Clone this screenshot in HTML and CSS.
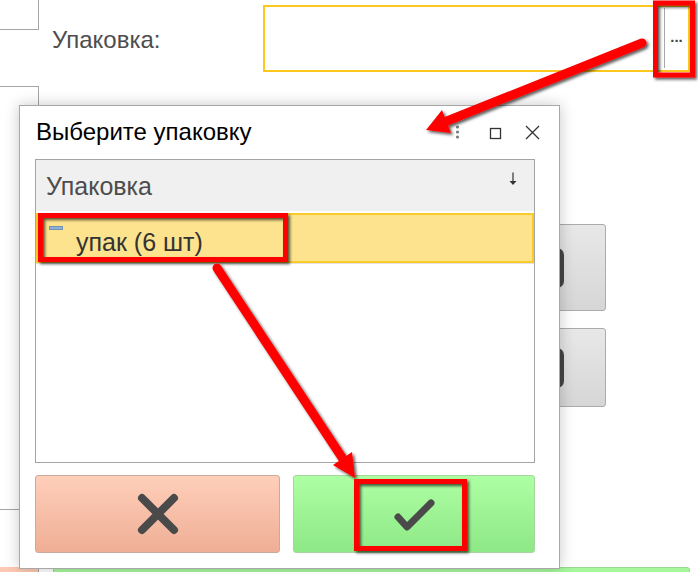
FILE: index.html
```html
<!DOCTYPE html>
<html lang="ru">
<head>
<meta charset="utf-8">
<title>Выберите упаковку</title>
<link rel="stylesheet" href="styles.css">
</head>
<body>
<div class="bg">
  <div class="row1">
    <div class="stub stub-top"></div>
    <div class="field-label">Упаковка:</div>
    <div class="input">
      <div class="input-btn">...</div>
    </div>
  </div>
  <div class="row2">
    <div class="stub stub-mid"></div>
    <div class="side-btns">
      <div class="gbtn gbtn-1"><span class="gicon"></span></div>
      <div class="gbtn gbtn-2"><span class="gicon"></span></div>
    </div>
  </div>
  <div class="row3">
    <div class="stub-bot"></div>
    <div class="green-bar"></div>
  </div>
</div>

<div class="dlg">
  <div class="dlg-title">
    <span class="dlg-title-text">Выберите упаковку</span>
    <svg class="title-icons" width="86" height="16" viewBox="0 0 86 16">
      <circle cx="2.5" cy="2" r="1.6" fill="#7a7a7a"/>
      <circle cx="2.5" cy="7" r="1.6" fill="#7a7a7a"/>
      <circle cx="2.5" cy="12" r="1.6" fill="#7a7a7a"/>
      <rect x="35.5" y="3.5" width="10" height="10" fill="none" stroke="#333" stroke-width="1.3"/>
      <path d="M71 1 L84 14 M84 1 L71 14" stroke="#333" stroke-width="1.3" fill="none"/>
    </svg>
  </div>
  <div class="dlg-body">
    <div class="list">
      <div class="list-head">
        <span class="head-text">Упаковка</span>
        <svg class="sort" width="10" height="14" viewBox="0 0 10 14">
          <path d="M5 0.5 V11" stroke="#333" stroke-width="1.2"/>
          <path d="M1.5 9 H8.5 L5 13 Z" fill="#333"/>
        </svg>
      </div>
      <div class="list-row">
        <span class="row-icon"></span>
        <span class="row-text">упак (6 шт)</span>
      </div>
    </div>
    <div class="btns">
      <div class="btn btn-cancel">
        <svg width="44" height="44" viewBox="0 0 44 44">
          <path d="M6 6 L38 38 M38 6 L6 38" stroke="#4a4a4a" stroke-width="8" stroke-linecap="round"/>
        </svg>
      </div>
      <div class="btn btn-ok">
        <svg width="44" height="36" viewBox="0 0 44 36">
          <path d="M6 21 L15 31 L39 7" stroke="#4a4a4a" stroke-width="7" stroke-linecap="round" stroke-linejoin="round" fill="none"/>
        </svg>
      </div>
    </div>
  </div>
</div>

<svg class="annot" width="698" height="572" viewBox="0 0 698 572">
  <defs>
    <filter id="sh" x="-20%" y="-20%" width="140%" height="140%">
      <feDropShadow dx="2" dy="2" stdDeviation="1.4" flood-color="#000" flood-opacity="0.65"/>
    </filter>
  </defs>
  <g filter="url(#sh)">
    <rect x="655.5" y="3" width="37" height="72" fill="none" stroke="#ff0000" stroke-width="5"/>
    <rect x="40.5" y="215.5" width="245" height="44" fill="none" stroke="#ff0000" stroke-width="5"/>
    <rect x="356.5" y="481.5" width="108" height="67" fill="none" stroke="#ff0000" stroke-width="5"/>
    <path d="M642 43 L447 121" stroke="#ff0000" stroke-width="9" stroke-linecap="round"/>
    <path d="M426 130 L451 133 L442 110 Z" fill="#ff0000"/>
    <path d="M217 268 L343 459" stroke="#ff0000" stroke-width="9" stroke-linecap="round"/>
    <path d="M355 478 L333 465 L352 452 Z" fill="#ff0000"/>
  </g>
</svg>
</body>
</html>
```

FILE: styles.css
```css
html, body {
  margin: 0;
  padding: 0;
}
body {
  width: 698px;
  height: 572px;
  overflow: hidden;
  position: relative;
  background: #fff;
  font-family: "Liberation Sans", Arial, sans-serif;
}

/* background form */
.bg {
  display: flex;
  flex-direction: column;
}
.row1 {
  display: flex;
  height: 77px;
  align-items: flex-start;
}
.stub-top {
  width: 39px;
  height: 30px;
  box-sizing: border-box;
  border-right: 1px solid #a4a4a4;
  border-bottom: 1px solid #a4a4a4;
}
.field-label {
  margin-left: 13px;
  width: 211px;
  margin-top: 26px;
  font-size: 24px;
  line-height: 28px;
  color: #4d4d4d;
}
.input {
  margin-top: 5px;
  width: 427px;
  height: 67px;
  box-sizing: border-box;
  border: 2px solid #fcc81e;
  display: flex;
  justify-content: flex-end;
}
.input-btn {
  width: 24px;
  margin: 1px 0 2px;
  border-left: 1px solid #a8a8a8;
  display: flex;
  align-items: center;
  justify-content: center;
  font-size: 15px;
  font-weight: bold;
  color: #444;
  padding-bottom: 4px;
  box-sizing: border-box;
}
.row2 {
  display: flex;
  height: 490px;
}
.stub-mid {
  margin-top: 9px;
  width: 39px;
  height: 424px;
  box-sizing: border-box;
  border-top: 1px solid #a4a4a4;
  border-right: 1px solid #a4a4a4;
  border-bottom: 1px solid #a4a4a4;
}
.side-btns {
  margin-left: auto;
  margin-right: 92px;
  margin-top: 147px;
  display: flex;
  flex-direction: column;
  gap: 17px;
}
.gbtn {
  width: 140px;
  box-sizing: border-box;
  border: 1px solid #ababab;
  border-radius: 3px;
  background: linear-gradient(#e8e8e8, #d6d6d6);
  display: flex;
  align-items: center;
}
.gbtn-1 { height: 87px; }
.gbtn-2 { height: 79px; }
.gicon {
  margin-left: 65px;
  width: 32px;
  height: 40px;
  border-radius: 7px;
  background: #454545;
}
.row3 {
  display: flex;
}
.stub-bot {
  width: 39px;
  height: 20px;
  box-sizing: border-box;
  background: #fdc9b2;
  border-right: 1px solid #a4a4a4;
}
.green-bar {
  margin-left: 14px;
  width: 637px;
  height: 20px;
  box-sizing: border-box;
  background: #a6f79c;
  border: 1px solid #98d890;
  border-radius: 3px;
}

/* dialog */
.dlg {
  position: absolute;
  left: 19px;
  top: 105px;
  width: 541px;
  height: 464px;
  box-sizing: border-box;
  border: 1px solid #a8a8a8;
  background: #fff;
  box-shadow: 0 0 14px rgba(0, 0, 0, 0.22);
  display: flex;
  flex-direction: column;
}
.dlg-title {
  height: 53px;
  display: flex;
  align-items: center;
  padding: 0 18px 0 16px;
}
.dlg-title-text {
  font-size: 24px;
  color: #000;
  margin-top: -2px;
}
.title-icons {
  margin-left: auto;
  display: block;
}
.dlg-body {
  flex: 1;
  display: flex;
  flex-direction: column;
  padding: 0 24px 15px 15px;
}
.list {
  height: 304px;
  box-sizing: border-box;
  border: 1px solid #a4a4a4;
  display: flex;
  flex-direction: column;
}
.list-head {
  height: 51px;
  background: #f0f0f0;
  display: flex;
  align-items: center;
  padding-left: 10px;
  padding-right: 16px;
}
.head-text {
  font-size: 25px;
  color: #4d4d4d;
  margin-top: 2px;
}
.sort {
  margin-left: auto;
  margin-top: -14px;
  display: block;
}
.list-row {
  margin-top: 2px;
  height: 50px;
  box-sizing: border-box;
  border: 2px solid #fbcb2a;
  background: #fde38e;
  display: flex;
  align-items: flex-start;
  box-shadow: 0 1px 0 #e2e2e2;
}
.row-icon {
  margin: 11px 0 0 11px;
  width: 14px;
  height: 4px;
  box-sizing: border-box;
  background: #90b2d2;
  border: 1px solid #6f92b6;
}
.row-text {
  margin: 12px 0 0 13px;
  font-size: 25px;
  line-height: 30px;
  color: #333;
}
.btns {
  margin-top: auto;
  display: flex;
  gap: 13px;
  height: 78px;
}
.btn {
  box-sizing: border-box;
  border-radius: 3px;
  display: flex;
  align-items: center;
  justify-content: center;
}
.btn-cancel {
  width: 245px;
  background: linear-gradient(#ffcfba, #efae95);
  border: 1px solid #c9aa9c;
}
.btn-ok {
  flex: 1;
  background: linear-gradient(#adffa3, #8ee886);
  border: 1px solid #a6d69e;
}

/* annotations */
.annot {
  position: absolute;
  left: 0;
  top: 0;
  pointer-events: none;
}
```
